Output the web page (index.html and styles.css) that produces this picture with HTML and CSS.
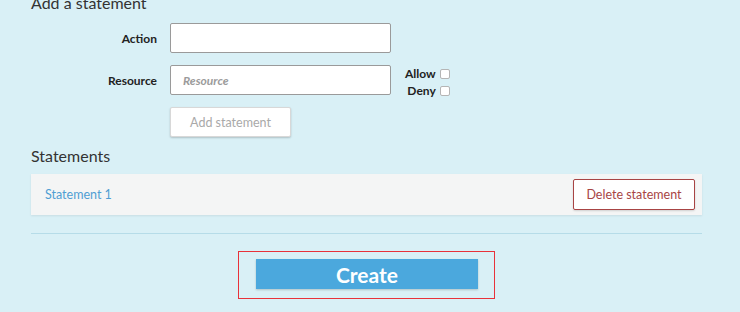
FILE: index.html
```html
<!DOCTYPE html>
<html lang="en">
<head>
    <meta charset="UTF-8">
    <title>New policy</title>
    <link rel="stylesheet" href="styles.css">
</head>
<body>
    <div class="container">
        <h2 class="section-title add-title">Add a statement</h2>

        <div class="form-row">
            <label class="field-label" for="action">Action</label>
            <input type="text" id="action" class="field-input">
        </div>

        <div class="form-row">
            <label class="field-label" for="resource">Resource</label>
            <input type="text" id="resource" class="field-input" placeholder="Resource">
            <div class="effects">
                <label class="effect">Allow <span class="box"></span></label>
                <label class="effect">Deny <span class="box"></span></label>
            </div>
        </div>

        <div class="form-row">
            <span class="field-label"></span>
            <button class="add-btn">Add statement</button>
        </div>

        <h2 class="section-title">Statements</h2>

        <div class="statement">
            <a class="statement-link" href="#">Statement 1</a>
            <button class="delete-btn">Delete statement</button>
        </div>

        <hr class="divider">

        <div class="submit">
            <div class="submit-frame">
                <button class="create-btn">Create</button>
            </div>
        </div>
    </div>
</body>
</html>
```

FILE: styles.css
```css
:root {
    --bg: #d9f0f6;
    --blue: #4ba8dd;
    --red: #a84444;
    --dark: #222;
}

* {
    margin: 0;
    padding: 0;
    box-sizing: border-box;
}

body {
    font-family: 'Lato', 'Noto Sans', sans-serif;
    background-color: var(--bg);
    color: var(--dark);
    overflow: hidden;
}

.container {
    width: 671px;
    margin-left: 31px;
    margin-top: -6px;
}

.section-title {
    font-size: 16px;
    font-weight: 400;
    color: #333;
    line-height: 18px;
}

.add-title {
    margin-bottom: 11px;
}

.form-row {
    display: flex;
    align-items: center;
    margin-bottom: 12px;
}

.field-label {
    width: 126px;
    margin-right: 13px;
    text-align: right;
    font-size: 12px;
    font-weight: 700;
    color: #222;
}

.field-input {
    width: 221px;
    height: 30px;
    padding: 0 12px;
    border: 1px solid #9a9a9a;
    border-radius: 2px;
    background: white;
    font-family: inherit;
    font-size: 12px;
}

.field-input::placeholder {
    color: #9b9b9b;
    font-style: italic;
    font-weight: 700;
}

.effects {
    align-self: flex-start;
    display: flex;
    flex-direction: column;
    align-items: flex-end;
    gap: 5px;
    height: 30px;
    margin-left: 14px;
    padding-top: 3px;
}

.effect {
    display: flex;
    align-items: center;
    gap: 4px;
    font-size: 12px;
    font-weight: 700;
    line-height: 12px;
}

.box {
    width: 10px;
    height: 10px;
    border: 1px solid #b5b5b5;
    border-radius: 2px;
    background: white;
}

.add-btn {
    width: 121px;
    height: 30px;
    background: white;
    border: 1px solid #d8d8d8;
    border-radius: 2px;
    box-shadow: 0 1px 2px rgba(0, 0, 0, 0.2);
    color: #a9a9a9;
    font-family: inherit;
    font-size: 12.5px;
}

.form-row:nth-of-type(3) {
    margin-bottom: 10px;
}

.statement {
    display: flex;
    align-items: center;
    justify-content: space-between;
    height: 41px;
    margin-top: 9px;
    padding: 0 7px 0 14px;
    background-color: #f4f5f5;
    box-shadow: 0 1px 2px rgba(0, 0, 0, 0.08);
}

.statement-link {
    color: #4f9ed3;
    font-size: 12.5px;
    text-decoration: none;
}

.delete-btn {
    width: 122px;
    height: 31px;
    background: white;
    border: 1px solid var(--red);
    border-radius: 2px;
    box-shadow: 0 1px 2px rgba(0, 0, 0, 0.15);
    color: var(--red);
    font-family: inherit;
    font-size: 12.5px;
}

.divider {
    border: none;
    border-top: 1px solid #b6dce8;
    margin-top: 18px;
}

.submit {
    display: flex;
    justify-content: center;
    margin-top: 17px;
}

.submit-frame {
    padding: 7px 16px 9px 17px;
    border: 1px solid #e8323a;
}

.create-btn {
    display: block;
    width: 222px;
    height: 30px;
    background-color: var(--blue);
    border: none;
    box-shadow: 0 1px 2px rgba(0, 0, 0, 0.2);
    color: white;
    font-family: inherit;
    font-size: 21px;
    font-weight: 700;
}
```
